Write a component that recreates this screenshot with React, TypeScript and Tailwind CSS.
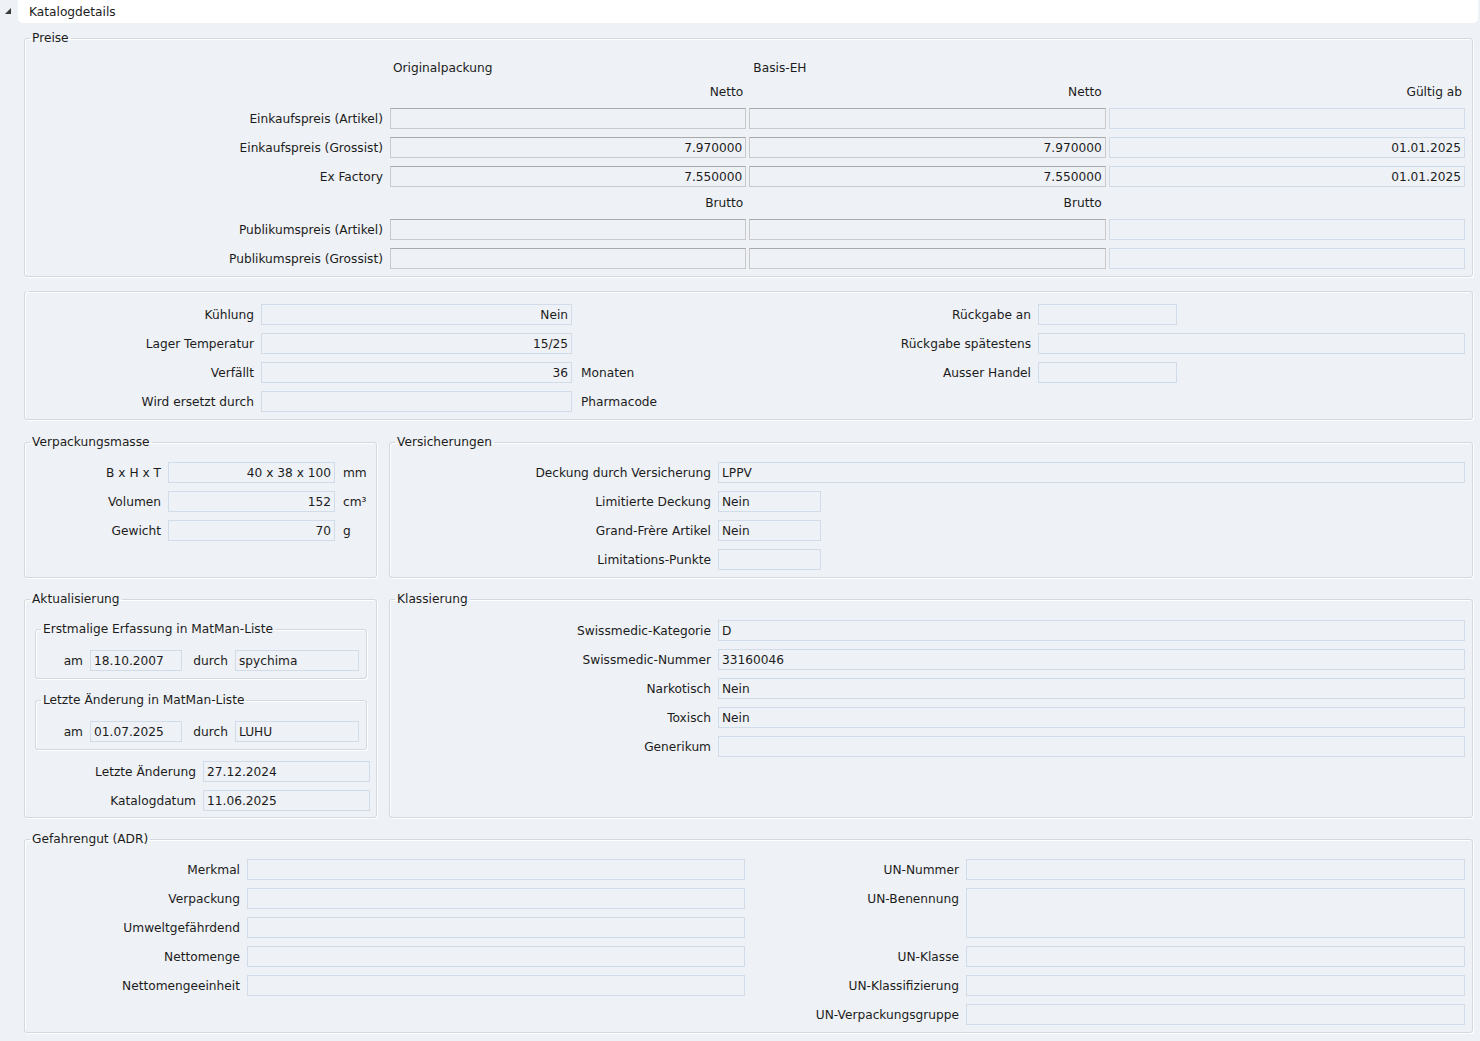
import React from 'react';

type FieldProps = { v?: string; right?: boolean; gray?: boolean; className?: string };

const Field = ({ v = '', right = false, gray = false, className = '' }: FieldProps) => (
  <div
    className={`h-[21px] border ${gray ? 'border-[#c9c9c9] border-t-[#a9a9a9]' : 'border-[#d2dce8]'} bg-[#eef1f5] px-[3px] flex items-center whitespace-nowrap overflow-hidden ${right ? 'justify-end' : ''} ${className}`}
  >
    {v}
  </div>
);

const Label = ({ children, className = '' }: { children?: React.ReactNode; className?: string }) => (
  <div className={`h-[21px] flex items-center justify-end whitespace-nowrap ${className}`}>{children}</div>
);

const Box = ({ title, className = '', children }: { title?: string; className?: string; children: React.ReactNode }) => (
  <fieldset className={`min-w-0 border border-[#d3d8df] rounded-[3px] shadow-[inset_1px_1px_0_#ffffff,1px_1px_0_#ffffff] ${className}`}>
    {title !== undefined ? (
      <legend className="ml-[5px] px-[2px] leading-[16px]">{title}</legend>
    ) : (
      <legend className="ml-[1px] w-[3px] h-0" />
    )}
    {children}
  </fieldset>
);

const App: React.FC = () => {
  return (
    <div className="min-h-screen bg-[#eef1f5] text-[#1c1c1c] text-[12.2px] leading-[16px] font-['DejaVu_Sans',sans-serif] pb-[8px]">
      {/* Kopfzeile */}
      <div className="h-[23px] flex">
        <div className="w-[18px] flex items-start pt-[8px] pl-[5px]">
          <svg width="6" height="6" viewBox="0 0 6 6">
            <polygon points="6,0 6,6 0,6" fill="#3a3a3a" />
          </svg>
        </div>
        <div className="flex-1 mr-[2px] bg-white rounded-b-[5px] flex items-center pl-[11px]">Katalogdetails</div>
      </div>

      <div className="pl-[24px] pr-[7px]">
        {/* Preise */}
        <Box title="Preise" className="mt-[7px]">
          <div className="grid grid-cols-[362px_1fr_1fr_1fr] gap-x-[3px] gap-y-[8px] pt-[14px] pb-[7px] pr-[7px]">
            <div />
            <div className="pl-[3px]">Originalpackung</div>
            <div className="pl-[4px]">Basis-EH</div>
            <div />

            <div />
            <div className="text-right pr-[3px]">Netto</div>
            <div className="text-right pr-[4px]">Netto</div>
            <div className="text-right pr-[3px]">Gültig ab</div>

            <Label className="pr-[4px]">Einkaufspreis (Artikel)</Label>
            <Field gray />
            <Field gray />
            <Field />

            <Label className="pr-[4px]">Einkaufspreis (Grossist)</Label>
            <Field gray right v="7.970000" />
            <Field gray right v="7.970000" />
            <Field right v="01.01.2025" />

            <Label className="pr-[4px]">Ex Factory</Label>
            <Field gray right v="7.550000" />
            <Field gray right v="7.550000" />
            <Field right v="01.01.2025" />

            <div />
            <div className="text-right pr-[3px]">Brutto</div>
            <div className="text-right pr-[4px]">Brutto</div>
            <div />

            <Label className="pr-[4px]">Publikumspreis (Artikel)</Label>
            <Field gray />
            <Field gray />
            <Field />

            <Label className="pr-[4px]">Publikumspreis (Grossist)</Label>
            <Field gray />
            <Field gray />
            <Field />
          </div>
        </Box>

        {/* Lagerung / Rückgabe */}
        <Box className="mt-[14px]">
          <div className="grid grid-cols-[229px_311px_1fr_auto_427px] gap-x-[7px] gap-y-[8px] pt-[12px] pb-[7px] pr-[7px]">
            <Label>Kühlung</Label>
            <Field right v="Nein" />
            <div />
            <Label>Rückgabe an</Label>
            <Field className="w-[139px]" />

            <Label>Lager Temperatur</Label>
            <Field right v="15/25" />
            <div />
            <Label>Rückgabe spätestens</Label>
            <Field />

            <Label>Verfällt</Label>
            <Field right v="36" />
            <div className="h-[21px] flex items-center pl-[2px]">Monaten</div>
            <Label>Ausser Handel</Label>
            <Field className="w-[139px]" />

            <Label>Wird ersetzt durch</Label>
            <Field />
            <div className="h-[21px] flex items-center pl-[2px]">Pharmacode</div>
            <div />
            <div />
          </div>
        </Box>

        {/* Verpackungsmasse / Versicherungen */}
        <div className="flex gap-[12px] mt-[14px]">
          <Box title="Verpackungsmasse" className="w-[353px] shrink-0">
            <div className="grid grid-cols-[136px_167px_auto] gap-x-[7px] gap-y-[8px] pt-[12px] pb-[7px]">
              <Label>B x H x T</Label>
              <Field right v="40 x 38 x 100" />
              <div className="h-[21px] flex items-center pl-[1px]">mm</div>

              <Label>Volumen</Label>
              <Field right v="152" />
              <div className="h-[21px] flex items-center pl-[1px]">cm³</div>

              <Label>Gewicht</Label>
              <Field right v="70" />
              <div className="h-[21px] flex items-center pl-[1px]">g</div>
            </div>
          </Box>
          <Box title="Versicherungen" className="flex-1">
            <div className="grid grid-cols-[321px_1fr] gap-x-[7px] gap-y-[8px] pt-[12px] pb-[7px] pr-[7px]">
              <Label>Deckung durch Versicherung</Label>
              <Field v="LPPV" />
              <Label>Limitierte Deckung</Label>
              <Field v="Nein" className="w-[103px]" />
              <Label>Grand-Frère Artikel</Label>
              <Field v="Nein" className="w-[103px]" />
              <Label>Limitations-Punkte</Label>
              <Field className="w-[103px]" />
            </div>
          </Box>
        </div>

        {/* Aktualisierung / Klassierung */}
        <div className="flex gap-[12px] mt-[13px]">
          <Box title="Aktualisierung" className="w-[353px] shrink-0">
            <div className="pb-[6px]">
              <Box title="Erstmalige Erfassung in MatMan-Liste" className="mt-[14px] ml-[10px] mr-[9px]">
                <div className="grid grid-cols-[47px_92px_39px_124px] gap-x-[7px] pt-[13px] pb-[7px]">
                  <Label>am</Label>
                  <Field v="18.10.2007" />
                  <Label>durch</Label>
                  <Field v="spychima" />
                </div>
              </Box>
              <Box title="Letzte Änderung in MatMan-Liste" className="mt-[13px] ml-[10px] mr-[9px]">
                <div className="grid grid-cols-[47px_92px_39px_124px] gap-x-[7px] pt-[13px] pb-[7px]">
                  <Label>am</Label>
                  <Field v="01.07.2025" />
                  <Label>durch</Label>
                  <Field v="LUHU" />
                </div>
              </Box>
              <div className="grid grid-cols-[171px_167px] gap-x-[7px] gap-y-[8px] mt-[11px]">
                <Label>Letzte Änderung</Label>
                <Field v="27.12.2024" />
                <Label>Katalogdatum</Label>
                <Field v="11.06.2025" />
              </div>
            </div>
          </Box>
          <Box title="Klassierung" className="flex-1">
            <div className="grid grid-cols-[321px_1fr] gap-x-[7px] gap-y-[8px] pt-[13px] pb-[7px] pr-[7px]">
              <Label>Swissmedic-Kategorie</Label>
              <Field v="D" />
              <Label>Swissmedic-Nummer</Label>
              <Field v="33160046" />
              <Label>Narkotisch</Label>
              <Field v="Nein" />
              <Label>Toxisch</Label>
              <Field v="Nein" />
              <Label>Generikum</Label>
              <Field />
            </div>
          </Box>
        </div>

        {/* Gefahrengut */}
        <Box title="Gefahrengut (ADR)" className="mt-[13px]">
          <div className="grid grid-cols-[215px_498px_1fr_499px] gap-x-[7px] gap-y-[8px] pt-[12px] pb-[7px] pr-[7px]">
            <Label>Merkmal</Label>
            <Field />
            <Label>UN-Nummer</Label>
            <Field />

            <Label>Verpackung</Label>
            <Field />
            <Label className="row-span-2 self-start">UN-Benennung</Label>
            <div className="row-span-2 border border-[#d2dce8] bg-[#eef1f5]" />

            <Label>Umweltgefährdend</Label>
            <Field />

            <Label>Nettomenge</Label>
            <Field />
            <Label>UN-Klasse</Label>
            <Field />

            <Label>Nettomengeeinheit</Label>
            <Field />
            <Label>UN-Klassifizierung</Label>
            <Field />

            <div />
            <div />
            <Label>UN-Verpackungsgruppe</Label>
            <Field />
          </div>
        </Box>
      </div>
    </div>
  );
};

export default App;
